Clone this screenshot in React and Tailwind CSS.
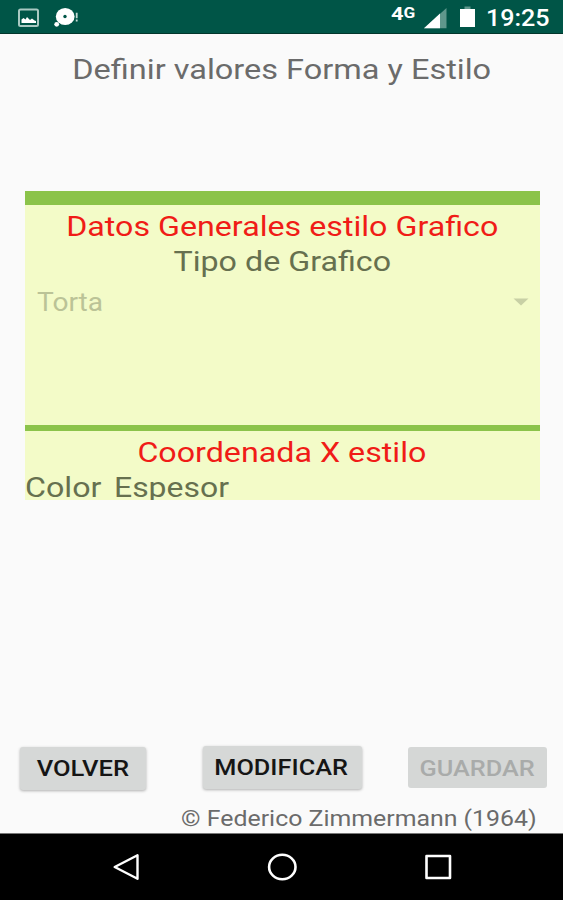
import React from 'react';

const StatusBar = () => (
  <header className="h-[34px] flex items-start bg-[#005547] border-b border-[#02362c] text-white">
    <svg className="mt-[7px] ml-[17px]" width="23" height="21" viewBox="0 0 23 21">
      <rect x="2" y="2.500" width="19" height="16.500" rx="1.500" fill="none" stroke="#a9c9c2" strokeWidth="2" />
      <path d="M4.500 16v-3.500l2-1.500 2 1.500 1.500-2.500 3 3 2-1.500 2.500 2 1.500 0.500v2z" fill="#fff" />
    </svg>
    <svg className="mt-[6px] ml-[13px]" width="27" height="23" viewBox="0 0 27 23">
      <ellipse cx="12.200" cy="10.500" rx="9.400" ry="8.600" fill="#fff" />
      <circle cx="3.700" cy="18.300" r="2.400" fill="#fff" />
      <circle cx="12" cy="10.500" r="1.700" fill="#005547" />
      <path d="M23.700 6.700v5.500M23.700 13.500v2" stroke="#c4dad5" strokeWidth="1.800" />
    </svg>
    <div className="ml-auto mr-[13px] flex items-start font-medium">
      <div className="w-[27px] mt-[3px] flex origin-left scale-x-115 leading-[21px] font-bold">
        <span className="text-[19px]">4</span>
        <span className="text-[15px] leading-[20px]">G</span>
      </div>
      <svg className="mt-[7px] ml-[5px]" width="25" height="22" viewBox="0 0 25 22">
        <path d="M1 21.200 23.500 1v20.200z" fill="#5f978c" />
        <path d="M1 21.200 17 6.500v14.700z" fill="#fff" />
      </svg>
      <svg className="mt-[6px] ml-[11px]" width="17" height="21" viewBox="0 0 17 21">
        <path d="M5.500 0.500h6v3h-6z" fill="#5f978c" />
        <path d="M1 3h15v18h-15z" fill="#fff" />
      </svg>
      <span className="w-[63px] ml-[11px] mt-[6px] text-[23px] leading-[26px] origin-left scale-x-109 -translate-x-px">19:25</span>
    </div>
  </header>
);

const Heading = ({ children }) => (
  <h2 className="h-[35.5px] leading-[35.500px] text-center text-[28.5px] font-normal text-[#f01c17]">
    <span className="inline-block scale-x-113">{children}</span>
  </h2>
);

const NavBar = () => (
  <nav className="h-[67px] flex items-center justify-between px-[110px] bg-black border-t border-[#777]">
    <svg width="32" height="32" viewBox="0 0 32 32" fill="none" stroke="#fff" strokeWidth="2.400" strokeLinejoin="round">
      <path d="M4.700 16 27.500 4.200v23.600z" />
    </svg>
    <svg width="32" height="32" viewBox="0 0 32 32" fill="none" stroke="#fff" strokeWidth="2.600">
      <ellipse cx="16.300" cy="16" rx="13.200" ry="12.200" />
    </svg>
    <svg width="32" height="32" viewBox="0 0 32 32" fill="none" stroke="#fff" strokeWidth="2.600" strokeLinejoin="round">
      <rect x="5.500" y="5" width="23.500" height="22" />
    </svg>
  </nav>
);

const App = () => {
  return (
    <div className="w-[563px] h-[900px] flex flex-col overflow-hidden bg-[#fafafa] text-[#6b6b6b] font-['Roboto',sans-serif]">
      <StatusBar />

      <main className="flex-1 flex flex-col">
        <h1 className="h-[157px] pt-[18px] text-center text-[28.5px] leading-[36px] font-normal">
          <span className="inline-block scale-x-114">Definir valores Forma y Estilo</span>
        </h1>

        <section className="h-[309px] ml-[24.5px] w-[515.5px] bg-[#f3fbc8] text-[#66704f] overflow-hidden">
          <div className="h-[221px] border-t-[14px] border-[#8bc34a] pt-[3.5px] mb-[13px]">
            <Heading>Datos Generales estilo Grafico</Heading>
            <p className="h-[35.5px] leading-[35.500px] text-center text-[28.5px]">
              <span className="inline-block scale-x-113">Tipo de Grafico</span>
            </p>
            <div className="h-[45px] pl-[12.5px] pr-[11px] flex items-center justify-between text-[26px] text-[#bbc397]">
              <span className="origin-left scale-x-108">Torta</span>
              <svg width="16" height="8" viewBox="0 0 16 8">
                <path d="M0.500 0.500h15l-7.500 7z" fill="#c8d0a5" />
              </svg>
            </div>
          </div>
          <div className="border-t-[6px] border-[#8bc34a] pt-[3.5px]">
            <Heading>Coordenada X estilo</Heading>
            <div className="h-[35.5px] leading-[35.500px] flex text-[28.5px]">
              <span className="w-[89.5px] origin-left scale-x-113">Color</span>
              <span className="origin-left scale-x-112">Espesor</span>
            </div>
          </div>
        </section>

        <div className="mt-auto h-[56px] flex items-start text-[22px] font-medium leading-[44px] text-[#151515]">
          <button className="mt-px ml-[19.5px] w-[126px] h-[42.5px] rounded-[3px] bg-[#d6d8d7] shadow-[0_1px_3px_rgba(0,0,0,0.3)]">
            <span className="inline-block scale-x-116">VOLVER</span>
          </button>
          <button className="ml-[57px] w-[159px] h-[43px] rounded-[3px] bg-[#d6d8d7] shadow-[0_1px_3px_rgba(0,0,0,0.3)]">
            <span className="inline-block -translate-x-px scale-x-115">MODIFICAR</span>
          </button>
          <button disabled className="mt-px ml-[46.5px] w-[139px] h-[41px] rounded-[3px] bg-[#d5d7d6] text-[#a9abaa]">
            <span className="inline-block scale-x-115">GUARDAR</span>
          </button>
        </div>
        <footer className="h-[31px] pt-px pr-[26px] text-right text-[22px] leading-[32px]">
          <span className="inline-block origin-right scale-x-113">© Federico Zimmermann (1964)</span>
        </footer>
      </main>

      <NavBar />
    </div>
  );
};

export default App;
